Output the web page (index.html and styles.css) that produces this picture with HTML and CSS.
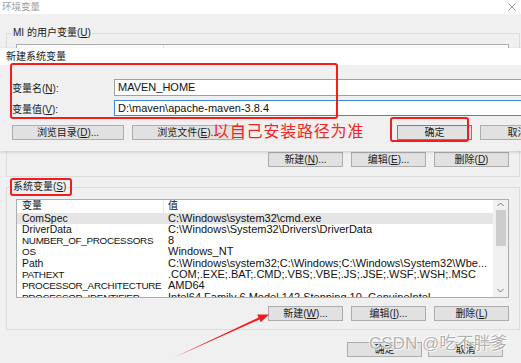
FILE: index.html
```html
<!DOCTYPE html>
<html lang="zh-CN">
<head>
<meta charset="utf-8">
<title>环境变量</title>
<link rel="stylesheet" href="styles.css">
</head>
<body>
<div class="win">
  <div class="titlebar">
    <span class="title">环境变量</span>
    <svg class="close" width="8" height="8" viewBox="0 0 8 8"><path d="M0.5 0.5L7.5 7.5M7.5 0.5L0.5 7.5" stroke="#9a9a9a" stroke-width="1"/></svg>
  </div>
  <div class="content">
    <fieldset class="group group-user">
      <legend>MI 的用户变量(<u>U</u>)</legend>
      <div class="list list-user"><div class="col-div"></div></div>
      <div class="btnrow">
        <button class="btn">新建(<u>N</u>)...</button>
        <button class="btn">编辑(<u>E</u>)...</button>
        <button class="btn">删除(<u>D</u>)</button>
      </div>
    </fieldset>
    <fieldset class="group group-sys">
      <legend>系统变量(<u>S</u>)</legend>
      <div class="list list-sys">
        <div class="rows">
          <div class="row head"><span class="name">变量</span><span class="val">值</span></div>
          <div class="row hover"><span class="name">ComSpec</span><span class="val">C:\Windows\system32\cmd.exe</span></div>
          <div class="row"><span class="name">DriverData</span><span class="val">C:\Windows\System32\Drivers\DriverData</span></div>
          <div class="row"><span class="name caps">NUMBER_OF_PROCESSORS</span><span class="val">8</span></div>
          <div class="row"><span class="name caps">OS</span><span class="val">Windows_NT</span></div>
          <div class="row"><span class="name">Path</span><span class="val">C:\Windows\system32;C:\Windows;C:\Windows\System32\Wbe...</span></div>
          <div class="row"><span class="name caps">PATHEXT</span><span class="val">.COM;.EXE;.BAT;.CMD;.VBS;.VBE;.JS;.JSE;.WSF;.WSH;.MSC</span></div>
          <div class="row"><span class="name caps">PROCESSOR_ARCHITECTURE</span><span class="val">AMD64</span></div>
          <div class="row"><span class="name caps">PROCESSOR_IDENTIFIER</span><span class="val">Intel64 Family 6 Model 142 Stepping 10, GenuineIntel</span></div>
        </div>
        <div class="scrollbar">
          <svg class="sb-arrow" width="15" height="10" viewBox="0 0 15 10"><path d="M4.5 6L7.5 3L10.5 6" fill="none" stroke="#7a7a7a" stroke-width="1"/></svg>
          <div class="thumb"></div>
          <div class="sb-space"></div>
          <svg class="sb-arrow" width="15" height="10" viewBox="0 0 15 10"><path d="M4.5 4L7.5 7L10.5 4" fill="none" stroke="#7a7a7a" stroke-width="1"/></svg>
        </div>
      </div>
      <div class="btnrow">
        <button class="btn">新建(<u>W</u>)...</button>
        <button class="btn">编辑(<u>I</u>)...</button>
        <button class="btn">删除(<u>L</u>)</button>
      </div>
    </fieldset>
    <div class="footer">
      <button class="btn">确定</button>
      <button class="btn">取消</button>
    </div>
  </div>
</div>

<div class="dialog">
  <div class="dlg-title">新建系统变量</div>
  <div class="dlg-body">
    <div class="field">
      <label class="lbl">变量名(<u>N</u>):</label>
      <div class="input">MAVEN_HOME</div>
    </div>
    <div class="field">
      <label class="lbl">变量值(<u>V</u>):</label>
      <div class="input focus">D:\maven\apache-maven-3.8.4</div>
    </div>
    <div class="dlg-btns">
      <button class="btn wide">浏览目录(<u>D</u>)...</button>
      <button class="btn wide">浏览文件(<u>E</u>)...</button>
      <span class="spacer"></span>
      <button class="btn default">确定</button>
      <button class="btn">取消</button>
    </div>
  </div>
</div>

<div class="mark mark-inputs"></div>
<div class="mark mark-ok"></div>
<div class="mark mark-sys"></div>
<div class="note">以自己安装路径为准</div>
<svg class="arrow" width="521" height="363" viewBox="0 0 521 363">
  <polygon points="174,357.5 258.6,317.6 257.2,314.4 269,314.5 260.8,322.2 259.6,319.4" fill="#f21c1c"/>
</svg>
<div class="watermark">CSDN @吃不胖爹</div>
</body>
</html>
```

FILE: styles.css
```css
* { box-sizing: border-box; }

html, body {
  margin: 0;
  padding: 0;
}

body {
  width: 521px;
  height: 363px;
  overflow: hidden;
  position: relative;
  background: #f0f0f0;
  font-family: "Liberation Sans", "Noto Sans CJK SC", sans-serif;
  font-size: 10px;
  color: #1a1a1a;
}

u { text-decoration: underline; text-underline-offset: 1px; }

/* outer window */
.win {
  width: 521px;
  height: 363px;
  display: flex;
  flex-direction: column;
}

.titlebar {
  height: 14px;
  background: #ffffff;
  display: flex;
  align-items: center;
  justify-content: space-between;
  padding: 0 5px 1px 2px;
}

.title {
  font-size: 9.5px;
  color: #9c9c9c;
  line-height: 12px;
}

.close { display: block; }

.content {
  display: flex;
  flex-direction: column;
  padding: 0 1px 0 6px;
}

.group {
  margin: 0;
  padding: 0 10px 0 9px;
  border: 1px solid #dcdcdc;
  min-width: 0;
}

.group legend {
  font-size: 10px;
  line-height: 14px;
  padding: 0 1px;
  margin-left: -4px;
  color: #1a1a1a;
}

.group-user {
  margin-top: 12px;
  padding-bottom: 9px;
}

.group-sys {
  margin-top: 3px;
  padding-bottom: 8px;
}

.list {
  background: #ffffff;
  border: 1px solid #adadad;
}

.list-user {
  margin-top: 4px;
  height: 100px;
  position: relative;
}

.col-div {
  width: 1px;
  height: 12px;
  margin-left: 146px;
  background: #e5e5e5;
}

.list-sys {
  margin-top: 5px;
  height: 99px;
  display: flex;
  overflow: hidden;
  color: #111;
}

.rows {
  flex: 1;
  min-width: 0;
  overflow: hidden;
}

.row {
  display: flex;
  height: 11.33px;
  line-height: 11.33px;
  white-space: nowrap;
}

.row.head {
  height: 12.5px;
  line-height: 12.5px;
}

.row.hover { background: #e5e5e5; }

.name {
  width: 147px;
  flex: none;
  padding-left: 5px;
  font-size: 10.4px;
  overflow: hidden;
}

.name.caps {
  font-size: 9.9px;
  letter-spacing: -0.3px;
}

.head .name {
  font-size: 10px;
  border-right: 1px solid #e5e5e5;
}

.val {
  padding-left: 4px;
  font-size: 11px;
}

.head .val { font-size: 10px; }

.scrollbar {
  width: 15px;
  flex: none;
  background: #f0f0f0;
  display: flex;
  flex-direction: column;
  align-items: center;
  padding-bottom: 2px;
}

.sb-arrow { display: block; flex: none; }

.thumb {
  width: 10px;
  height: 36px;
  background: #cdcdcd;
  flex: none;
}

.sb-space { flex: 1; }

.btnrow {
  display: flex;
  justify-content: flex-end;
  gap: 8px;
  margin-top: 8px;
  padding-right: 0;
}

.btn {
  font-family: "Liberation Sans", "Noto Sans CJK SC", sans-serif;
  font-size: 10px;
  color: #1a1a1a;
  width: 75px;
  height: 15px;
  padding: 0;
  margin: 0;
  line-height: 13px;
  background: #e1e1e1;
  border: 1px solid #adadad;
  border-radius: 0;
  display: flex;
  align-items: center;
  justify-content: center;
}

.footer {
  display: flex;
  justify-content: flex-end;
  gap: 6px;
  margin-top: 12px;
  padding-right: 17px;
}

/* new variable dialog (window over the other window) */
.dialog {
  position: absolute;
  left: 0;
  top: 48px;
  width: 560px;
  height: 103px;
  background: #f0f0f0;
  box-shadow: 0 1px 3px rgba(0, 0, 0, 0.18);
  display: flex;
  flex-direction: column;
}

.dlg-title {
  height: 17px;
  background: #ffffff;
  padding-left: 6px;
  font-size: 10px;
  line-height: 18px;
  color: #1a1a1a;
}

.dlg-body {
  padding: 14px 0 0 12px;
  display: flex;
  flex-direction: column;
  gap: 4px;
}

.field {
  display: flex;
  align-items: center;
}

.lbl {
  width: 102px;
  flex: none;
  font-size: 10px;
}

.input {
  flex: 1;
  height: 17px;
  background: #ffffff;
  border: 1px solid #a0a0a0;
  padding-left: 3px;
  font-size: 11px;
  line-height: 15px;
  color: #111;
}

.input.focus {
  height: 16px;
  border-color: #3c8bd8;
  line-height: 14px;
}

.dlg-btns {
  display: flex;
  gap: 8px;
  margin-top: 5px;
  width: 543px;
}

.btn.wide { width: 112px; }

.btn.default { border-color: #3c8bd8; }

.spacer { flex: 1; }

/* annotations over the screenshot */
.mark {
  position: absolute;
  border: 2px solid #f01e1e;
  border-radius: 3px;
}

.mark-inputs { left: 10px; top: 63px; width: 328px; height: 56px; }
.mark-ok { left: 390px; top: 117px; width: 79px; height: 25px; }
.mark-sys { left: 10px; top: 178px; width: 62px; height: 18px; }

.note {
  position: absolute;
  left: 213px;
  top: 121px;
  font-family: "Noto Sans CJK SC", sans-serif;
  font-size: 16px;
  line-height: 19px;
  letter-spacing: 0.8px;
  color: #f42424;
}

.arrow {
  position: absolute;
  left: 0;
  top: 0;
}

.watermark {
  position: absolute;
  left: 369px;
  top: 334px;
  font-family: "Liberation Sans", "Noto Sans CJK SC", sans-serif;
  font-size: 17px;
  line-height: 20px;
  color: rgba(110, 110, 110, 0.55);
  text-shadow: 0 0 1px #ffffff, 1px 1px 0 rgba(255,255,255,0.8), -1px -1px 0 rgba(255,255,255,0.8);
  white-space: nowrap;
}
```
